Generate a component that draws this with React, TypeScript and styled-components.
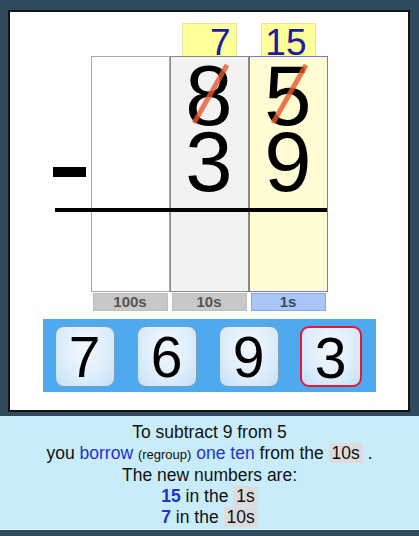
import React from "react";
import styled, { createGlobalStyle } from "styled-components";

const Global = createGlobalStyle`
  html, body { margin: 0; padding: 0; }
  body {
    background: #304a5e;
    font-family: "Liberation Sans", Arial, sans-serif;
    width: 419px;
    height: 536px;
    overflow: hidden;
  }
`;

const Page = styled.div`
  display: flex;
  flex-direction: column;
  padding-top: 10px;
`;

const Panel = styled.div`
  box-sizing: border-box;
  margin-left: 8px;
  width: 402px;
  height: 402px;
  background: #fffefc;
  border: 2px solid #141414;
  display: flex;
  flex-direction: column;
  align-items: center;
  padding-top: 11px;
`;

const Board = styled.div`
  position: relative;
  display: grid;
  grid-template-columns: repeat(3, 79px);
`;

const Column = styled.div`
  display: flex;
  flex-direction: column;
  align-items: stretch;
`;

const CarrySlot = styled.div`
  height: 33px;
  display: flex;
  justify-content: center;
`;

const Carry = styled.div<{ $pad: number }>`
  box-sizing: border-box;
  width: 55px;
  height: 33px;
  background: #ffff99;
  border: 1px solid #e6e6a0;
  border-bottom: none;
  color: #1c1c9c;
  font-size: 37px;
  line-height: 37px;
  text-align: right;
  padding-right: ${(p) => p.$pad}px;
  overflow: visible;
`;

const Cell = styled.div<{ $bg: string; $border: string }>`
  box-sizing: border-box;
  height: 236px;
  background: ${(p) => p.$bg};
  border: 1px solid ${(p) => p.$border};
  padding-top: 6px;
`;

const Digit = styled.div`
  position: relative;
  height: 66px;
  font-size: 85px;
  line-height: 66px;
  text-align: center;
  color: #000;
`;

const Strike = styled.svg`
  position: absolute;
  left: 0;
  top: 0;
  width: 77px;
  height: 66px;
  overflow: visible;
`;

const Label = styled.div<{ $bg: string; $border: string; $color: string }>`
  box-sizing: border-box;
  margin: 1px 2px 0 2px;
  height: 18px;
  background: ${(p) => p.$bg};
  border: 1px solid ${(p) => p.$border};
  color: ${(p) => p.$color};
  font-size: 15px;
  font-weight: bold;
  line-height: 16px;
  text-align: center;
`;

const Minus = styled.div`
  position: absolute;
  left: -38px;
  top: 144px;
  width: 33px;
  height: 10px;
  background: #000;
`;

const Rule = styled.div`
  position: absolute;
  left: -36px;
  top: 185px;
  width: 272px;
  height: 4px;
  background: #000;
`;

const Bar = styled.div`
  box-sizing: border-box;
  margin-top: 8px;
  width: 333px;
  height: 73px;
  background: #4ea9ef;
  display: flex;
  align-items: flex-start;
  gap: 22px;
  padding: 7px 0 0 12px;
`;

const Key = styled.div<{ $selected?: boolean }>`
  box-sizing: border-box;
  width: ${(p) => (p.$selected ? 62 : 60)}px;
  height: 61px;
  margin-left: ${(p) => (p.$selected ? -1 : 0)}px;
  border-radius: 9px;
  border: ${(p) => (p.$selected ? "2px solid #e2173a" : "1px solid #7d9fba")};
  background: radial-gradient(ellipse at 50% 35%, #f2f9fe 0%, #dcedfb 60%, #c4e0f6 100%);
  font-size: 57px;
  line-height: 61px;
  text-align: center;
  color: #000;
`;

const Info = styled.div`
  margin-top: 4px;
  height: 114px;
  background: #c9ecfa;
  border-bottom: 1px solid #e4f6fd;
  padding-top: 6px;
  box-sizing: border-box;
  text-align: center;
  font-size: 17.5px;
  line-height: 20.7px;
  color: #111;
`;

const Line = styled.div``;

const Blue = styled.span<{ $bold?: boolean }>`
  color: #2233cc;
  font-weight: ${(p) => (p.$bold ? "bold" : "normal")};
`;

const Small = styled.span`
  font-size: 13px;
`;

const Tag = styled.span`
  display: inline-block;
  background: #dcdcdc;
  padding: 0 3px;
  line-height: 20px;
`;

const StrikeLine = () => (
  <Strike viewBox="0 0 77 66">
    <line x1="23" y1="60" x2="56" y2="2" stroke="#e8562a" strokeOpacity="0.8" strokeWidth="5" />
  </Strike>
);

type Col = {
  carry?: string;
  pad?: number;
  digits: { v: string; struck?: boolean }[];
  bg: string;
  border: string;
  label: string;
  labelBg: string;
  labelBorder: string;
  labelColor: string;
};

const columns: Col[] = [
  {
    digits: [],
    bg: "#ffffff",
    border: "#a8a8a8",
    label: "100s",
    labelBg: "#c8c8c8",
    labelBorder: "#bdbdbd",
    labelColor: "#555",
  },
  {
    carry: "7",
    pad: 5,
    digits: [{ v: "8", struck: true }, { v: "3" }],
    bg: "#f2f2f2",
    border: "#8a8a8a",
    label: "10s",
    labelBg: "#c8c8c8",
    labelBorder: "#bdbdbd",
    labelColor: "#555",
  },
  {
    carry: "15",
    pad: 8,
    digits: [{ v: "5", struck: true }, { v: "9" }],
    bg: "#fffbd2",
    border: "#7474ee",
    label: "1s",
    labelBg: "#a9c6f6",
    labelBorder: "#8aa6e0",
    labelColor: "#3a4a66",
  },
];

export default function App() {
  return (
    <>
      <Global />
      <Page>
        <Panel>
          <Board>
            {columns.map((c) => (
              <Column key={c.label}>
                <CarrySlot>{c.carry && <Carry $pad={c.pad ?? 5}>{c.carry}</Carry>}</CarrySlot>
                <Cell $bg={c.bg} $border={c.border}>
                  {c.digits.map((d, i) => (
                    <Digit key={i}>
                      {d.v}
                      {d.struck && <StrikeLine />}
                    </Digit>
                  ))}
                </Cell>
                <Label $bg={c.labelBg} $border={c.labelBorder} $color={c.labelColor}>
                  {c.label}
                </Label>
              </Column>
            ))}
            <Minus />
            <Rule />
          </Board>
          <Bar>
            <Key>7</Key>
            <Key>6</Key>
            <Key>9</Key>
            <Key $selected>3</Key>
          </Bar>
        </Panel>
        <Info>
          <Line>To subtract 9 from 5</Line>
          <Line>
            you <Blue>borrow</Blue> <Small>(regroup)</Small> <Blue>one ten</Blue> from the <Tag>10s</Tag> .
          </Line>
          <Line>The new numbers are:</Line>
          <Line>
            <Blue $bold>15</Blue> in the <Tag>1s</Tag>
          </Line>
          <Line>
            <Blue $bold>7</Blue> in the <Tag>10s</Tag>
          </Line>
        </Info>
      </Page>
    </>
  );
}
